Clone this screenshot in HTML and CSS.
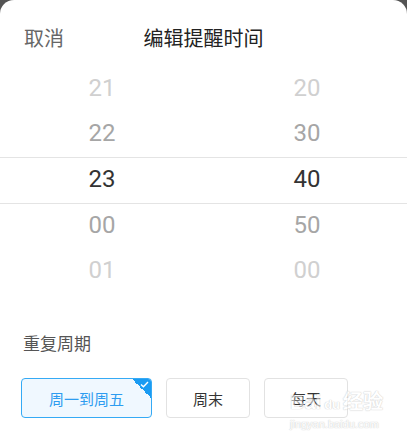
FILE: index.html
```html
<!DOCTYPE html>
<html lang="zh-CN">
<head>
    <meta charset="UTF-8">
    <meta name="viewport" content="width=device-width, initial-scale=1.0">
    <title>编辑提醒时间</title>
    <link rel="stylesheet" href="styles.css">
</head>
<body>
    <div class="sheet">
        <div class="header">
            <span class="cancel">取消</span>
            <span class="title">编辑提醒时间</span>
        </div>

        <div class="picker">
            <div class="row far"><span>21</span><span>20</span></div>
            <div class="row near"><span>22</span><span>30</span></div>
            <div class="row current"><span>23</span><span>40</span></div>
            <div class="row near"><span>00</span><span>50</span></div>
            <div class="row far"><span>01</span><span>00</span></div>
        </div>

        <div class="repeat">
            <div class="repeat-label">重复周期</div>
            <div class="options">
                <div class="option selected">
                    周一到周五
                    <span class="corner">
                        <svg width="9" height="7" viewBox="0 0 9 7"><path d="M1 3.6 L3.4 5.8 L8 1" fill="none" stroke="#fff" stroke-width="1.4"/></svg>
                    </span>
                </div>
                <div class="option">周末</div>
                <div class="option">每天</div>
            </div>
            <div class="watermark">
                <div class="wm-brand">Bai<span class="wm-du">du</span>经验</div>
                <div class="wm-url">jingyan.baidu.com</div>
            </div>
        </div>
    </div>
</body>
</html>
```

FILE: styles.css
```css
html, body {
    margin: 0;
    height: 100%;
}
body {
    background-color: #545454;
    font-family: Roboto, "Noto Sans CJK SC", sans-serif;
}
.sheet {
    background-color: #fff;
    border-radius: 14px 14px 0 0;
    height: 100%;
    position: relative;
}
.header {
    position: relative;
    height: 67px;
    box-sizing: border-box;
    padding-top: 28px;
    line-height: 22px;
    font-size: 20px;
}
.cancel {
    position: absolute;
    left: 24px;
    top: 28px;
    color: #666;
}
.title {
    display: block;
    text-align: center;
    color: #222;
}
.picker {
    font-size: 24px;
}
.row {
    display: grid;
    grid-template-columns: 204px 203px;
    height: 42px;
    padding-bottom: 3px;
    align-items: center;
    text-align: center;
}
.row span:last-child {
    padding-left: 3px;
}
.row.far {
    color: #d0d0d0;
}
.row.near {
    color: #a6a6a6;
}
.row.current {
    color: #333;
    border-top: 1px solid #e4e4e4;
    border-bottom: 1px solid #e4e4e4;
}
.repeat {
    position: relative;
    padding: 38px 0 0 23px;
}
.repeat-label {
    font-size: 17px;
    color: #555;
    line-height: 24px;
}
.options {
    display: flex;
    gap: 14px;
    margin-top: 22px;
    margin-left: -2px;
}
.option {
    position: relative;
    width: 84px;
    height: 40px;
    box-sizing: border-box;
    border: 1px solid #e2e2e2;
    border-radius: 4px;
    display: flex;
    align-items: center;
    justify-content: center;
    font-size: 15px;
    color: #333;
    overflow: hidden;
}
.option.selected {
    width: 131px;
    border-color: #35aaf5;
    background-color: #f0f8ff;
    color: #2d9cf0;
}
.corner {
    position: absolute;
    top: 0;
    right: 0;
    width: 19px;
    height: 19px;
    background: linear-gradient(to bottom left, #1a9bf2 50%, transparent 50%);
}
.corner svg {
    position: absolute;
    top: 2px;
    right: 2px;
}
.watermark {
    position: absolute;
    left: 290px;
    top: 98px;
    color: #fff;
    text-shadow: 0 0 1px #aaa, 0 0 1px #aaa;
    opacity: 0.55;
    font-family: "Liberation Sans", sans-serif;
}
.wm-brand {
    font-size: 20px;
    font-weight: bold;
    line-height: 20px;
}
.wm-du {
    font-size: 13px;
    margin: 0 3px;
}
.wm-url {
    font-size: 11px;
    margin-top: 3px;
}
```
